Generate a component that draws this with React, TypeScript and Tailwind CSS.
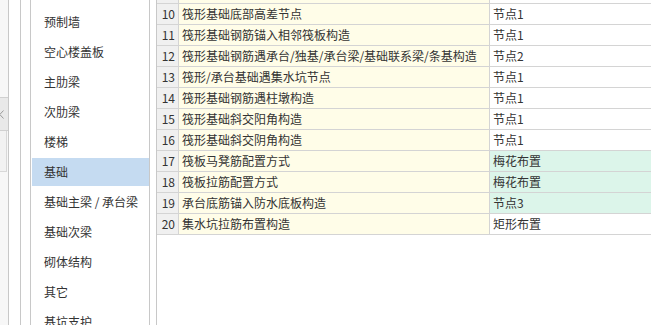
import React from "react";

const FONT = "font-['Microsoft_YaHei','Noto_Sans_CJK_SC',sans-serif]";

const MENU = [
  "预制墙",
  "空心楼盖板",
  "主肋梁",
  "次肋梁",
  "楼梯",
  "基础",
  "基础主梁 / 承台梁",
  "基础次梁",
  "砌体结构",
  "其它",
  "基坑支护",
];

interface Row {
  no: number;
  name: string;
  value: string;
  green?: boolean;
}

const ROWS: Row[] = [
  { no: 10, name: "筏形基础底部高差节点", value: "节点1" },
  { no: 11, name: "筏形基础钢筋锚入相邻筏板构造", value: "节点1" },
  { no: 12, name: "筏形基础钢筋遇承台/独基/承台梁/基础联系梁/条基构造", value: "节点2" },
  { no: 13, name: "筏形/承台基础遇集水坑节点", value: "节点1" },
  { no: 14, name: "筏形基础钢筋遇柱墩构造", value: "节点1" },
  { no: 15, name: "筏形基础斜交阳角构造", value: "节点1" },
  { no: 16, name: "筏形基础斜交阴角构造", value: "节点1" },
  { no: 17, name: "筏板马凳筋配置方式", value: "梅花布置", green: true },
  { no: 18, name: "筏板拉筋配置方式", value: "梅花布置", green: true },
  { no: 19, name: "承台底筋锚入防水底板构造", value: "节点3", green: true },
  { no: 20, name: "集水坑拉筋布置构造", value: "矩形布置" },
];

function LeftStrip() {
  return (
    <div className="w-[9px] shrink-0 border-r border-[#c8c8c8] bg-[#f7f7f7] flex flex-col">
      <div className="h-[98px] border-b border-[#d0d0d0]" />
      <div className="h-[33px] bg-[#e9e9e9] border-b border-[#d0d0d0] flex items-center">
        <svg width="5" height="9" viewBox="0 0 5 9" className="ml-[-1px]">
          <path d="M4.5 0.5 L0.8 4.5 L4.5 8.5" fill="none" stroke="#9a9a9a" strokeWidth="1" />
        </svg>
      </div>
      <div className="h-[41px] w-[7px] border-r border-b border-[#d8d8d8] bg-[#f2f2f2]" />
    </div>
  );
}

function Menu() {
  return (
    <div className="w-[119px] shrink-0 border-r border-[#c8c8c8] bg-white pt-[7px] flex flex-col">
      {MENU.map((m) => (
        <div key={m} className="h-[30px] py-[1px] shrink-0">
          <div
            className={`h-[28px] ml-[1px] pl-[12px] flex items-center text-[12px] text-[#333] whitespace-nowrap ${
              m === "基础" ? "bg-[#c5dbf1]" : ""
            }`}
          >
            {m}
          </div>
        </div>
      ))}
    </div>
  );
}

function Table() {
  return (
    <div className="flex-1 min-w-0 border-l border-[#c8c8c8] bg-white flex flex-col">
      <div className="h-[4px] flex border-b border-[#d4d4d4]">
        <div className="w-[22px] shrink-0 bg-[#f0f0f0] border-r border-[#d4d4d4]" />
        <div className="w-[311px] shrink-0 bg-[#fffde8] border-r border-[#d4d4d4]" />
        <div className="flex-1 bg-white" />
      </div>
      {ROWS.map((r) => (
        <div key={r.no} className="h-[21px] flex border-b border-[#d4d4d4] text-[12px] text-[#333]">
          <div className="w-[22px] shrink-0 bg-[#f0f0f0] border-r border-[#d4d4d4] flex items-center justify-end pr-[3px]">
            {r.no}
          </div>
          <div className="w-[311px] shrink-0 bg-[#fffde8] border-r border-[#d4d4d4] flex items-center pl-[3px] whitespace-nowrap overflow-hidden">
            {r.name}
          </div>
          <div
            className={`flex-1 flex items-center pl-[3px] whitespace-nowrap ${
              r.green ? "bg-[#dcf5ea]" : "bg-white"
            }`}
          >
            {r.value}
          </div>
        </div>
      ))}
    </div>
  );
}

export default function App() {
  return (
    <div className={`w-[651px] h-[325px] overflow-hidden bg-white flex ${FONT}`}>
      <LeftStrip />
      <div className="w-[12px] shrink-0 border-r border-[#c8c8c8]" />
      <div className="w-[10px] shrink-0 border-r border-[#c8c8c8]" />
      <Menu />
      <div className="w-[6px] shrink-0" />
      <Table />
    </div>
  );
}
